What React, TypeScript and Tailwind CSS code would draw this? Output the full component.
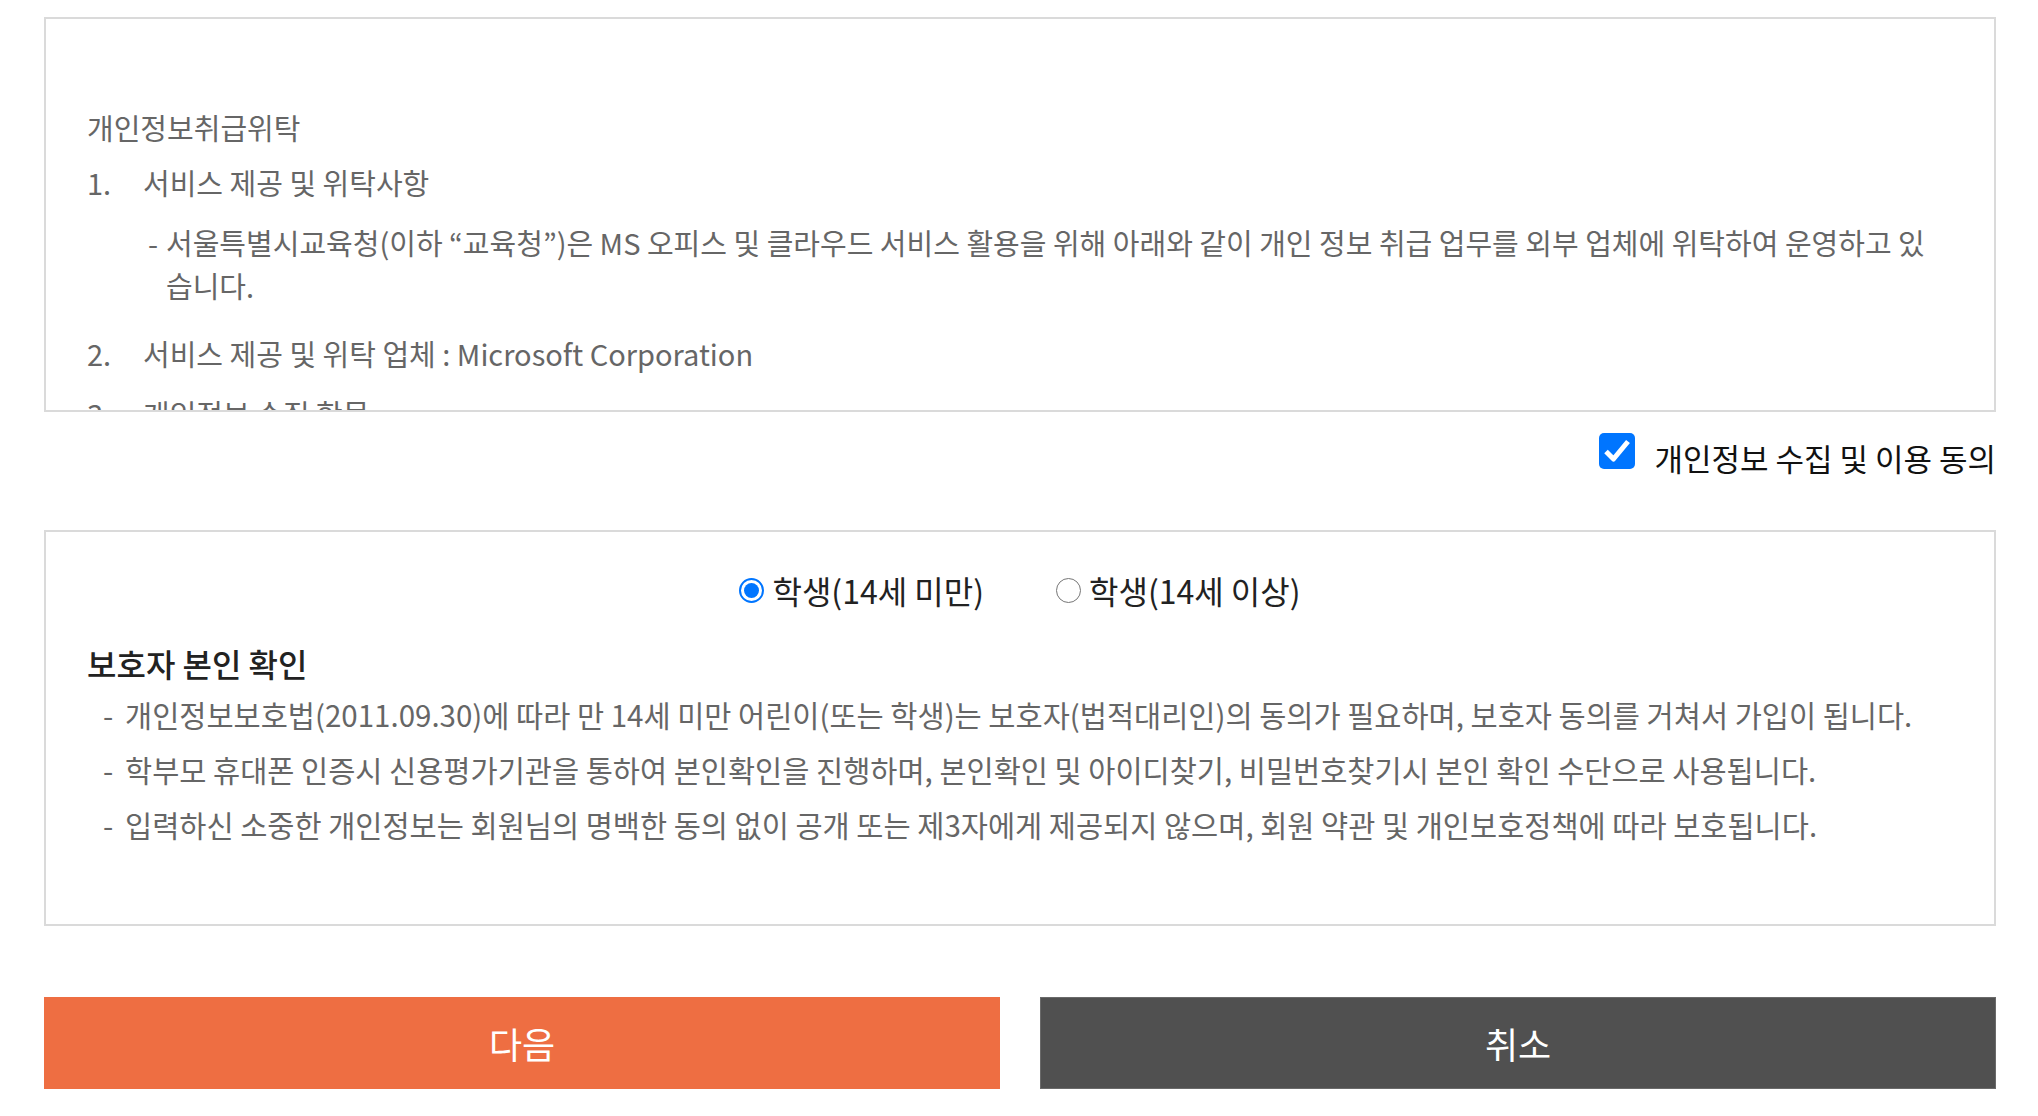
const font = "font-['Noto_Sans_CJK_KR','Noto_Sans',sans-serif]";

const guardianNotes = [
  "개인정보보호법(2011.09.30)에 따라 만 14세 미만 어린이(또는 학생)는 보호자(법적대리인)의 동의가 필요하며, 보호자 동의를 거쳐서 가입이 됩니다.",
  "학부모 휴대폰 인증시 신용평가기관을 통하여 본인확인을 진행하며, 본인확인 및 아이디찾기, 비밀번호찾기시 본인 확인 수단으로 사용됩니다.",
  "입력하신 소중한 개인정보는 회원님의 명백한 동의 없이 공개 또는 제3자에게 제공되지 않으며, 회원 약관 및 개인보호정책에 따라 보호됩니다.",
];

function Radio({ checked, label }: { checked: boolean; label: string }) {
  return (
    <label className="flex items-center gap-[8px] text-[32px] leading-[40px] text-[#222]">
      {checked ? (
        <span className="flex h-[25px] w-[25px] items-center justify-center rounded-full border-2 border-[#0075ff] bg-white">
          <span className="h-[15px] w-[15px] rounded-full bg-[#0075ff]" />
        </span>
      ) : (
        <span className="h-[25px] w-[25px] rounded-full border-[1.5px] border-[#767676] bg-white" />
      )}
      {label}
    </label>
  );
}

export default function App() {
  return (
    <div className={`min-h-screen bg-white pt-[17px] ${font}`}>
      <div className="ml-[44px] w-[1952px]">
        {/* 개인정보 위탁 약관 */}
        <div className="h-[395px] overflow-hidden border-2 border-[#dadada] pl-[41px] pt-[87px] text-[29px] leading-[42px] text-[#666]">
          <p className="mb-[13px]">개인정보취급위탁</p>
          <div className="mb-[18px] flex">
            <span className="w-[56px] shrink-0">1.</span>
            <span>서비스 제공 및 위탁사항</span>
          </div>
          <div className="mb-[25px] ml-[61px] flex leading-[43px]">
            <span className="w-[18px] shrink-0">-</span>
            <span>
              <span className="whitespace-nowrap">
                서울특별시교육청(이하 “교육청”)은 MS 오피스 및 클라우드 서비스 활용을 위해 아래와 같이 개인 정보 취급 업무를 외부 업체에 위탁하여 운영하고 있
              </span>
              <br />
              습니다.
            </span>
          </div>
          <div className="mb-[18px] flex">
            <span className="w-[56px] shrink-0">2.</span>
            <span>서비스 제공 및 위탁 업체 : Microsoft Corporation</span>
          </div>
          <div className="flex">
            <span className="w-[56px] shrink-0">3.</span>
            <span>개인정보 수집 항목</span>
          </div>
        </div>

        {/* 동의 체크 */}
        <div className="mt-[21px] flex items-start justify-end gap-[20px]">
          <span className="flex h-[36px] w-[36px] items-center justify-center rounded-[5px] bg-[#0075ff]">
            <svg viewBox="0 0 36 36" className="h-[36px] w-[36px]">
              <path
                d="M7 18.5 L14.5 26 L29 8.5"
                fill="none"
                stroke="#fff"
                strokeWidth="5"
                strokeLinejoin="round"
              />
            </svg>
          </span>
          <span className="mt-[5px] text-[31px] leading-[40px] text-[#111]">
            개인정보 수집 및 이용 동의
          </span>
        </div>

        {/* 보호자 본인 확인 */}
        <div className="mt-[52px] h-[396px] border-2 border-[#dadada] px-[41px] pt-[38px]">
          <div className="flex justify-center gap-[72px]">
            <Radio checked label="학생(14세 미만)" />
            <Radio checked={false} label="학생(14세 이상)" />
          </div>
          <h3 className="mt-[33px] text-[32px] font-medium leading-[40px] text-[#222]">
            보호자 본인 확인
          </h3>
          <ul className="ml-[16px] mt-[4px] text-[29.5px] leading-[55px] text-[#666]">
            {guardianNotes.map((note) => (
              <li key={note} className="flex">
                <span className="w-[22px] shrink-0">-</span>
                <span className="whitespace-nowrap">{note}</span>
              </li>
            ))}
          </ul>
        </div>

        <div className="mt-[71px] grid grid-cols-2 gap-[40px]">
          <button
            type="button"
            className="flex h-[92px] items-center justify-center bg-[#ee6e42] text-[36px] text-white"
          >
            다음
          </button>
          <button
            type="button"
            className="flex h-[92px] items-center justify-center border border-[#6a6a6a] bg-[#505050] text-[36px] text-white"
          >
            취소
          </button>
        </div>
      </div>
    </div>
  );
}
